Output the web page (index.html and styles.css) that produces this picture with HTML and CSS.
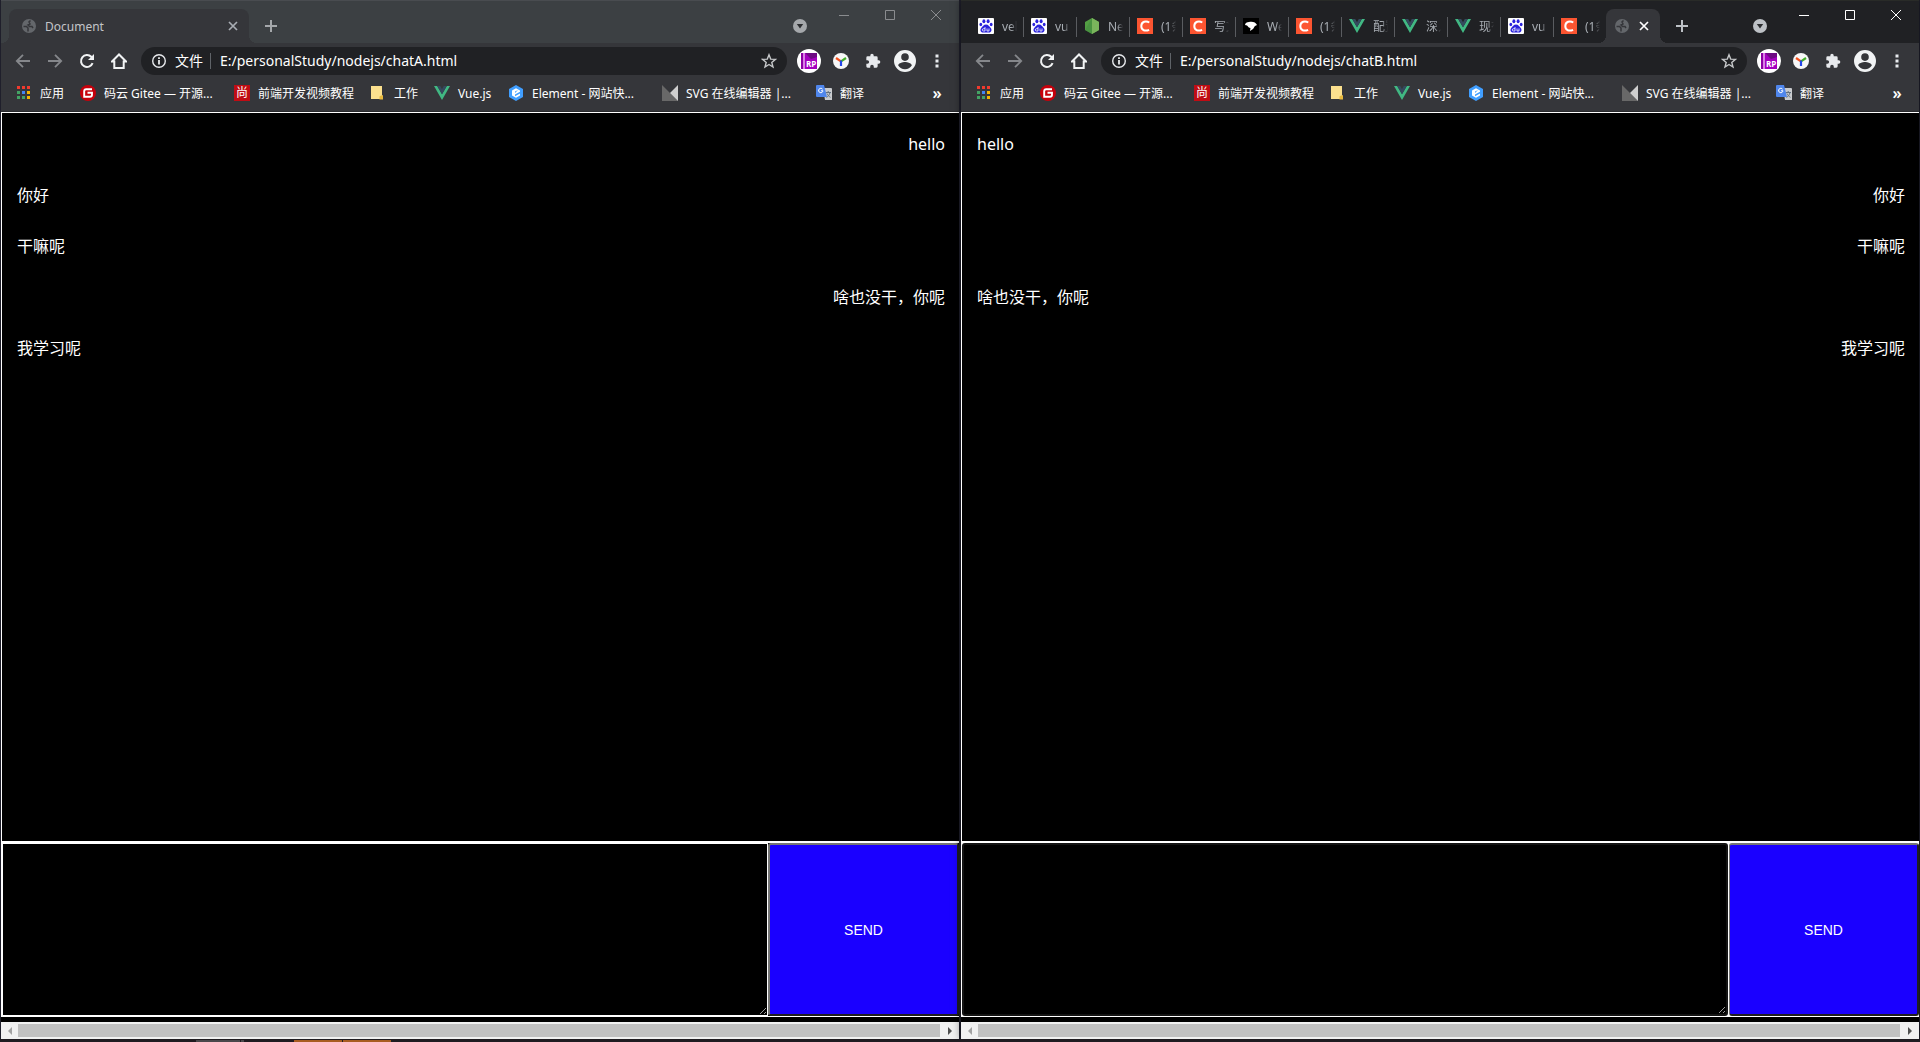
FILE: index.html
```html
<!DOCTYPE html>
<html lang="zh-CN">
<head>
<meta charset="utf-8">
<title>Chat windows</title>
<link rel="stylesheet" href="styles.css">
</head>
<body>
<svg class="sprite" aria-hidden="true">
  <symbol id="i-globe" viewBox="0 0 16 16"><circle cx="8" cy="8" r="7" fill="#64676b"/><path d="M2.500 8.500h3l1.500 1.500v3.500M9.500 2.500 8 4 9 6l-2 1 1.500 1.500h2.500l1 1.500" fill="none" stroke="#35363a" stroke-width="1.500"/></symbol>
  <symbol id="i-close" viewBox="0 0 16 16"><path d="m4 4 8 8m0-8-8 8" fill="none" stroke="currentColor" stroke-width="1.700"/></symbol>
  <symbol id="i-plus" viewBox="0 0 16 16"><path d="M8 2v12M2 8h12" stroke="currentColor" stroke-width="2"/></symbol>
  <symbol id="i-drop" viewBox="0 0 16 16"><circle cx="8" cy="8" r="7" fill="currentColor"/><path d="M4.800 6h6.400L8 10.400z" fill="#2b2d30"/></symbol>
  <symbol id="i-min" viewBox="0 0 12 12"><path d="M1 6.500h10" stroke="currentColor"/></symbol>
  <symbol id="i-max" viewBox="0 0 12 12"><path d="M1.500 1.500h9v9h-9z" fill="none" stroke="currentColor"/></symbol>
  <symbol id="i-exit" viewBox="0 0 12 12"><path d="m1 1 10 10M11 1 1 11" stroke="currentColor"/></symbol>
  <symbol id="i-back" viewBox="0 0 16 16"><path d="M15 8H2.500M8 1.800 1.800 8 8 14.200" fill="none" stroke="#85878b" stroke-width="1.800"/></symbol>
  <symbol id="i-fwd" viewBox="0 0 16 16"><path d="M1 8h12.500M8 1.800 14.200 8 8 14.200" fill="none" stroke="#85878b" stroke-width="1.800"/></symbol>
  <symbol id="i-reload" viewBox="0 0 16 16"><path d="M13.600 10.200A6 6 0 1 1 12.300 3.800L14 5.500" fill="none" stroke="#f1f3f4" stroke-width="2"/><path d="M15 1v6H9z" fill="#f1f3f4"/></symbol>
  <symbol id="i-home" viewBox="0 0 16 16"><path d="M1 8.500 8 1.500l7 7h-2.300V15H3.300V8.500z" fill="none" stroke="#f1f3f4" stroke-width="2"/></symbol>
  <symbol id="i-info" viewBox="0 0 16 16"><circle cx="8" cy="8" r="6.300" fill="none" stroke="#e8eaed" stroke-width="1.400"/><path d="M8 7v4.500M8 4.300v1.600" stroke="#e8eaed" stroke-width="1.800"/></symbol>
  <symbol id="i-star" viewBox="0 0 16 16"><path d="m8 1.800 1.700 4.300 4.700.3-3.600 3 1.200 4.600L8 11.500 4 14l1.200-4.600-3.600-3 4.700-.3z" fill="none" stroke="#c6c8ca" stroke-width="1.400"/></symbol>
  <symbol id="i-rp" viewBox="0 0 24 24"><circle cx="12" cy="12" r="12" fill="#fff"/><path d="M4 4h16v16H4z" fill="#b100c8"/><path d="M8 4h12v6l-6 1z" fill="#6d0a82"/><path d="M8 4l6 6 6-2v12H8z" fill="#a400bf"/><path d="M4 4h2v16H4z" fill="#8b00a4"/><path d="M7 4v16" stroke="#fff"/><text x="9" y="18" class="glyph-rp">RP</text></symbol>
  <symbol id="i-y" viewBox="0 0 16 16"><circle cx="8" cy="8" r="8" fill="#f7f7f7"/><path d="M8 8.300 3 5" stroke="#f4511e" stroke-width="2.200"/><path d="m8 8.300 5-3.300" stroke="#43b02a" stroke-width="2.200"/><path d="M8 7.500V13" stroke="#2447e8" stroke-width="2.200"/></symbol>
  <symbol id="i-puzzle" viewBox="0 0 24 24"><path d="M20.500 11H19V7a2 2 0 0 0-2-2h-4V3.500a2.500 2.500 0 0 0-5 0V5H4a2 2 0 0 0-2 2v3.800h1.500a2.700 2.700 0 0 1 0 5.400H2V20a2 2 0 0 0 2 2h3.800v-1.500a2.700 2.700 0 0 1 5.400 0V22H17a2 2 0 0 0 2-2v-4h1.500a2.500 2.500 0 0 0 0-5z" fill="#e8eaed"/></symbol>
  <symbol id="i-user" viewBox="0 0 24 24"><path d="M12 1a11 11 0 1 0 0 22 11 11 0 0 0 0-22zm0 3.300a3.800 3.800 0 1 1 0 7.600 3.800 3.800 0 0 1 0-7.600zm0 15.900a8 8 0 0 1-6.800-3.700c.1-2.200 4.500-3.400 6.800-3.400s6.700 1.200 6.800 3.400A8 8 0 0 1 12 20.200z" fill="#f1f3f4"/></symbol>
  <symbol id="i-menu" viewBox="0 0 16 16"><path d="M6.500 1.500h3v3h-3zm0 5h3v3h-3zm0 5h3v3h-3z" fill="#e8eaed"/></symbol>
  <symbol id="i-apps" viewBox="0 0 16 16"><path d="M1 1h3v3H1zm5 0h3v3H6zm5 0h3v3h-3z" fill="#f03a2e"/><path d="M1 6h3v3H1zM1 11h3v3H1zM6 11h3v3H6z" fill="#43a364"/><path d="M6 6h3v3H6z" fill="#4285f4"/><path d="M11 6h3v3h-3zm0 5h3v3h-3z" fill="#f5b400"/></symbol>
  <symbol id="i-gitee" viewBox="0 0 16 16"><circle cx="8" cy="8" r="8" fill="#c7000b"/><path d="M12 4.200H6.200A2 2 0 0 0 4.200 6.200V11.800H10a2 2 0 0 0 2-2V7.800H7.500" fill="none" stroke="#fff" stroke-width="1.900"/></symbol>
  <symbol id="i-shang" viewBox="0 0 16 16"><path d="M0 0h16v16H0z" fill="#c00c14"/><text x="2" y="12" class="glyph-shang">尚</text></symbol>
  <symbol id="i-note" viewBox="0 0 16 16"><path d="M1 1h11v9l1 1v3H1z" fill="#fbe08e"/><path d="M9.500 14.500v-3l1.500-1h2v4z" fill="#e8b93c"/></symbol>
  <symbol id="i-vue" viewBox="0 0 16 16"><path d="M0 1h3.200L8 9.300 12.800 1H16L8 15z" fill="#41b883"/><path d="M3.200 1h3L8 4.200 9.800 1h3L8 9.300z" fill="#35495e"/></symbol>
  <symbol id="i-element" viewBox="0 0 16 16"><path d="m8 0 7 4v8l-7 4-7-4V4z" fill="#409eff"/><path d="M12 5.500 8 3.300 4 5.600v4.800l4 2.300 4-2.300V8.500L7 11.200V9.500l5-2.800zM7 8V6.500L10 5" fill="#fff"/></symbol>
  <symbol id="i-svg" viewBox="0 0 16 16"><path d="M0 0v16h16z" fill="#686868"/><path d="M16 0v16L8 8z" fill="#cfcfcf"/></symbol>
  <symbol id="i-trans" viewBox="0 0 16 16"><path d="M7 3h8a1 1 0 0 1 1 1v11H9z" fill="#c9cbce"/><path d="M9.500 7.500H15M12.200 6v1.500M14 7.500c-.5 2.500-2 4-3.500 5M11 8.500c.8 1.800 2 3 3.500 3.800" fill="none" stroke="#607080"/><path d="M1 0h7l3 12H1a1 1 0 0 1-1-1V1a1 1 0 0 1 1-1z" fill="#4f86ec"/><path d="M6.600 4.200a2.200 2.200 0 1 0 .4 1.600H5" fill="none" stroke="#fff"/></symbol>
  <symbol id="i-baidu" viewBox="0 0 16 16"><rect width="16" height="16" rx="1" fill="#fff"/><g fill="#2b22dc"><ellipse cx="5.900" cy="3.300" rx="1.500" ry="2"/><ellipse cx="10.100" cy="3.300" rx="1.500" ry="2"/><ellipse cx="2.800" cy="6.500" rx="1.400" ry="1.800"/><ellipse cx="13.200" cy="6.500" rx="1.400" ry="1.800"/><path d="M8 6.500c2.500 0 3.200 2 4.800 3.500 1.500 1.800.5 4.500-1.600 4.500H4.800c-2.100 0-3.100-2.700-1.600-4.500C4.800 8.500 5.500 6.500 8 6.500z"/></g><path d="M7 9v4H5.500a1 1 0 0 1 0-2.300H7M9 10.500V13h2v-2.500" fill="none" stroke="#fff" stroke-width=".8"/></symbol>
  <symbol id="i-node" viewBox="0 0 16 16"><path d="m8 0 7 4v8l-7 4-7-4V4z" fill="#539e43"/><path d="m8 0 7 4v8l-7 4z" fill="#7ab55c"/><path d="M8 0 1 12l7 4z" fill="#3f873f" opacity=".5"/></symbol>
  <symbol id="i-csdn" viewBox="0 0 16 16"><path d="M0 0h16v16H0z" fill="#fc5531"/><path d="M12.300 4.500C9 2.500 4.500 3.500 4.300 8c0 4.500 4 5.500 7.800 3.800" fill="none" stroke="#fff" stroke-width="2"/></symbol>
  <symbol id="i-bird" viewBox="0 0 16 16"><path d="M0 0h16v16H0z" fill="#000"/><path d="M2 7c0-2 2-3 4-3 3-1 7 0 8 3l-2 1c-1 1-1 2-2 3l-3 2 .5-3C6 10 5 8.500 4 7.500z" fill="#fff"/></symbol>
</svg>

<main class="desktop">
  <section class="window window-a" aria-label="chatA">
    <header class="tabstrip">
      <div class="tab tab-active tab-wide">
        <svg class="icon"><use href="#i-globe"/></svg>
        <span class="tab-title">Document</span>
        <button class="tab-close" aria-label="关闭"><svg class="icon"><use href="#i-close"/></svg></button>
      </div>
      <button class="new-tab" aria-label="新标签页"><svg class="icon"><use href="#i-plus"/></svg></button>
      <button class="tab-search" aria-label="搜索标签页"><svg class="icon"><use href="#i-drop"/></svg></button>
      <div class="controls">
        <button aria-label="最小化"><svg><use href="#i-min"/></svg></button>
        <button aria-label="最大化"><svg><use href="#i-max"/></svg></button>
        <button aria-label="关闭窗口"><svg><use href="#i-exit"/></svg></button>
      </div>
    </header>
    <div class="toolbar">
      <button aria-label="后退"><svg class="icon"><use href="#i-back"/></svg></button>
      <button aria-label="前进"><svg class="icon"><use href="#i-fwd"/></svg></button>
      <button aria-label="重新加载"><svg class="icon"><use href="#i-reload"/></svg></button>
      <button aria-label="主页"><svg class="icon"><use href="#i-home"/></svg></button>
      <div class="omnibox">
        <svg class="icon"><use href="#i-info"/></svg>
        <label class="scheme" for="url-a">文件</label>
        <input class="url" id="url-a" type="text" value="E:/personalStudy/nodejs/chatA.html">
        <svg class="icon"><use href="#i-star"/></svg>
      </div>
      <button aria-label="RP"><svg class="icon-rp"><use href="#i-rp"/></svg></button>
      <button aria-label="Y"><svg class="icon"><use href="#i-y"/></svg></button>
      <button aria-label="扩展程序"><svg class="icon"><use href="#i-puzzle"/></svg></button>
      <button aria-label="用户"><svg class="icon-rp"><use href="#i-user"/></svg></button>
      <button aria-label="菜单"><svg class="icon"><use href="#i-menu"/></svg></button>
    </div>
    <nav class="bookmarks">
      <a href="#"><svg class="icon"><use href="#i-apps"/></svg>应用</a>
      <a href="#"><svg class="icon"><use href="#i-gitee"/></svg>码云 Gitee — 开源...</a>
      <a href="#"><svg class="icon"><use href="#i-shang"/></svg>前端开发视频教程</a>
      <a href="#"><svg class="icon"><use href="#i-note"/></svg>工作</a>
      <a href="#"><svg class="icon"><use href="#i-vue"/></svg>Vue.js</a>
      <a href="#"><svg class="icon"><use href="#i-element"/></svg>Element - 网站快...</a>
      <a href="#"><svg class="icon"><use href="#i-svg"/></svg>SVG 在线编辑器 |...</a>
      <a href="#"><svg class="icon"><use href="#i-trans"/></svg>翻译</a>
      <button class="more" aria-label="更多书签">»</button>
    </nav>
    <div class="page">
      <div class="messages">
        <p class="mine">hello</p>
        <p>你好</p>
        <p>干嘛呢</p>
        <p class="mine">啥也没干，你呢</p>
        <p>我学习呢</p>
      </div>
      <form class="composer">
        <textarea class="draft draft-focus" aria-label="消息"></textarea>
        <button class="send" type="button">SEND</button>
      </form>
    </div>
    <div class="scrollbar"><span class="arrow arrow-left"></span><span class="thumb"></span><span class="arrow arrow-right"></span></div>
  </section>

  <section class="window window-b" aria-label="chatB">
    <header class="tabstrip">
      <div class="tab"><svg class="icon"><use href="#i-baidu"/></svg><span class="tab-title">vel</span></div>
      <div class="tab"><svg class="icon"><use href="#i-baidu"/></svg><span class="tab-title">vu</span></div>
      <div class="tab"><svg class="icon"><use href="#i-node"/></svg><span class="tab-title">Ne</span></div>
      <div class="tab"><svg class="icon"><use href="#i-csdn"/></svg><span class="tab-title">(1条</span></div>
      <div class="tab"><svg class="icon"><use href="#i-csdn"/></svg><span class="tab-title">写文</span></div>
      <div class="tab"><svg class="icon"><use href="#i-bird"/></svg><span class="tab-title">We</span></div>
      <div class="tab"><svg class="icon"><use href="#i-csdn"/></svg><span class="tab-title">(1条</span></div>
      <div class="tab"><svg class="icon"><use href="#i-vue"/></svg><span class="tab-title">配置</span></div>
      <div class="tab"><svg class="icon"><use href="#i-vue"/></svg><span class="tab-title">深入</span></div>
      <div class="tab"><svg class="icon"><use href="#i-vue"/></svg><span class="tab-title">现有</span></div>
      <div class="tab"><svg class="icon"><use href="#i-baidu"/></svg><span class="tab-title">vu</span></div>
      <div class="tab tab-last"><svg class="icon"><use href="#i-csdn"/></svg><span class="tab-title">(1条</span></div>
      <div class="tab tab-active tab-small">
        <svg class="icon"><use href="#i-globe"/></svg>
        <button class="tab-close" aria-label="关闭"><svg class="icon"><use href="#i-close"/></svg></button>
      </div>
      <button class="new-tab" aria-label="新标签页"><svg class="icon"><use href="#i-plus"/></svg></button>
      <button class="tab-search" aria-label="搜索标签页"><svg class="icon"><use href="#i-drop"/></svg></button>
      <div class="controls">
        <button aria-label="最小化"><svg><use href="#i-min"/></svg></button>
        <button aria-label="最大化"><svg><use href="#i-max"/></svg></button>
        <button aria-label="关闭窗口"><svg><use href="#i-exit"/></svg></button>
      </div>
    </header>
    <div class="toolbar">
      <button aria-label="后退"><svg class="icon"><use href="#i-back"/></svg></button>
      <button aria-label="前进"><svg class="icon"><use href="#i-fwd"/></svg></button>
      <button aria-label="重新加载"><svg class="icon"><use href="#i-reload"/></svg></button>
      <button aria-label="主页"><svg class="icon"><use href="#i-home"/></svg></button>
      <div class="omnibox">
        <svg class="icon"><use href="#i-info"/></svg>
        <label class="scheme" for="url-b">文件</label>
        <input class="url" id="url-b" type="text" value="E:/personalStudy/nodejs/chatB.html">
        <svg class="icon"><use href="#i-star"/></svg>
      </div>
      <button aria-label="RP"><svg class="icon-rp"><use href="#i-rp"/></svg></button>
      <button aria-label="Y"><svg class="icon"><use href="#i-y"/></svg></button>
      <button aria-label="扩展程序"><svg class="icon"><use href="#i-puzzle"/></svg></button>
      <button aria-label="用户"><svg class="icon-rp"><use href="#i-user"/></svg></button>
      <button aria-label="菜单"><svg class="icon"><use href="#i-menu"/></svg></button>
    </div>
    <nav class="bookmarks">
      <a href="#"><svg class="icon"><use href="#i-apps"/></svg>应用</a>
      <a href="#"><svg class="icon"><use href="#i-gitee"/></svg>码云 Gitee — 开源...</a>
      <a href="#"><svg class="icon"><use href="#i-shang"/></svg>前端开发视频教程</a>
      <a href="#"><svg class="icon"><use href="#i-note"/></svg>工作</a>
      <a href="#"><svg class="icon"><use href="#i-vue"/></svg>Vue.js</a>
      <a href="#"><svg class="icon"><use href="#i-element"/></svg>Element - 网站快...</a>
      <a href="#"><svg class="icon"><use href="#i-svg"/></svg>SVG 在线编辑器 |...</a>
      <a href="#"><svg class="icon"><use href="#i-trans"/></svg>翻译</a>
      <button class="more" aria-label="更多书签">»</button>
    </nav>
    <div class="page">
      <div class="messages">
        <p>hello</p>
        <p class="mine">你好</p>
        <p class="mine">干嘛呢</p>
        <p>啥也没干，你呢</p>
        <p class="mine">我学习呢</p>
      </div>
      <form class="composer">
        <textarea class="draft" aria-label="消息"></textarea>
        <button class="send" type="button">SEND</button>
      </form>
    </div>
    <div class="scrollbar"><span class="arrow arrow-left"></span><span class="thumb"></span><span class="arrow arrow-right"></span></div>
  </section>
</main>
<footer class="taskbar">
  <span class="task"></span><span class="task task-edge"></span>
  <span class="task task-alert"></span><span class="task task-alert"></span>
</footer>
</body>
</html>
```

FILE: styles.css
```css
* { box-sizing: border-box; }

body {
  margin: 0;
  min-height: 100vh;
  display: flex;
  flex-direction: column;
  background: #1f1f2b;
  color: #fff;
  font-family: "Noto Sans", "Noto Sans CJK SC", sans-serif;
  font-size: 12px;
}

.sprite { display: none; }
.glyph-rp { font: bold 8px "Open Sans", sans-serif; fill: #fff; }
.glyph-shang { font: 12px "Noto Sans CJK SC", sans-serif; fill: #fff; }

button {
  display: flex;
  align-items: center;
  justify-content: center;
  padding: 0;
  border: 0;
  background: none;
  color: inherit;
  font: inherit;
}

svg { display: block; flex: none; }
.icon { width: 16px; height: 16px; }
.icon-rp { width: 24px; height: 24px; }

.desktop {
  flex: 1;
  display: grid;
  grid-template-columns: minmax(0, 1fr) minmax(0, 1fr);
  gap: 2px;
  padding: 0 1px;
}

.window {
  display: flex;
  flex-direction: column;
  min-width: 0;
  background: #35363a;
}
.window-b { box-shadow: 0 0 8px rgba(0, 0, 0, .5); }

/* Tab strip */
.tabstrip {
  display: flex;
  align-items: flex-end;
  height: 43px;
  padding-left: 8px;
  border-top: 1px solid #494c50;
  background: #3c4043;
  color: #a5a8ab;
}
.window-b .tabstrip {
  padding-left: 10px;
  border-top-color: #292b28;
  background: #202124;
  color: #bdc1c6;
}
.tab {
  position: relative;
  display: flex;
  align-items: center;
  gap: 8px;
  width: 53px;
  height: 34px;
  padding-left: 7px;
  color: #a8adb3;
}
.tab .tab-title {
  width: 15px;
  overflow: hidden;
  white-space: nowrap;
  mask-image: linear-gradient(90deg, #000 60%, transparent);
}
.window-b .tab:not(.tab-active)::after {
  content: "";
  position: absolute;
  right: 0;
  top: 8px;
  width: 1px;
  height: 20px;
  background: #5a5c60;
}
.window-b .tab.tab-last { width: 52px; }
.window-b .tab.tab-last::after { display: none; }
.tab-active {
  border-radius: 8px 8px 0 0;
  background: #35363a;
}
.tab-active::before, .tab-active::after {
  content: "";
  position: absolute;
  bottom: 0;
  width: 8px;
  height: 8px;
}
.tab-active::before { left: -8px; background: radial-gradient(circle at 0 0, transparent 8px, #35363a 8px); }
.tab-active::after { right: -8px; background: radial-gradient(circle at 100% 0, transparent 8px, #35363a 8px); }
.tab-wide { width: 240px; padding: 0 8px 0 12px; }
.tab-wide .tab-title { flex: 1; mask-image: none; color: #c3c5c8; }
.tab-small { width: 54px; gap: 6px; padding-left: 8px; }
.tab-small .tab-close { color: #fff; }
.new-tab { width: 28px; height: 34px; margin-left: 8px; }
.tab-search { width: 16px; height: 34px; margin: 0 13px 0 auto; }
.controls { display: flex; align-self: flex-start; color: #8a8c8f; }
.window-b .controls { color: #fff; }
.controls button { width: 46px; height: 28px; }
.controls svg { width: 12px; height: 12px; }

/* Toolbar */
.toolbar {
  display: flex;
  align-items: center;
  height: 36px;
  padding: 0 6px;
}
.toolbar button { width: 32px; height: 32px; }
.omnibox {
  flex: 1;
  display: flex;
  align-items: center;
  height: 28px;
  margin: 0 6px;
  padding: 0 10px;
  border-radius: 14px;
  background: #202124;
}
.scheme {
  margin-left: 8px;
  padding-right: 7px;
  border-right: 1px solid #5f6368;
  font-size: 14px;
  line-height: 16px;
}
.url {
  flex: 1;
  min-width: 0;
  height: 20px;
  margin-left: 9px;
  padding: 0 0 2px;
  border: 0;
  outline: 0;
  background: none;
  color: #fff;
  font: 14px "Noto Sans", "Noto Sans CJK SC", sans-serif;
}

/* Bookmarks */
.bookmarks {
  display: grid;
  grid-template-columns: 64px 154px 136px 64px 74px 154px 154px 1fr 24px;
  align-items: center;
  height: 33px;
  padding: 0 10px 4px 15px;
  border-bottom: 1px solid #292a2d;
}
.bookmarks a {
  display: flex;
  align-items: center;
  gap: 8px;
  color: #fff;
  text-decoration: none;
  white-space: nowrap;
}
.more { height: 28px; font-size: 16px; font-weight: 600; }

/* Chat page */
.page {
  flex: 1;
  display: flex;
  flex-direction: column;
  padding-bottom: 5px;
  background: #000;
}
.messages {
  flex: 1;
  padding: 6px 14px 0 15px;
  border: solid #fff;
  border-width: 1px 0 1px 1px;
  font-size: 16px;
}
.messages p { margin: 0; line-height: 51px; }
.messages .mine { text-align: right; }

.composer {
  display: flex;
  height: 175px;
  border: solid #fff;
  border-width: 1px 0 1px 1px;
  background: #000;
}
.draft {
  flex: 1;
  min-width: 0;
  margin: 0;
  padding: 2px;
  border: 2px solid #141414;
  border-radius: 3px;
  outline: 0;
  background: #000;
  color: #fff;
}
.draft-focus { border: 1px solid #fff; border-radius: 0; }
.window-b .composer { background: #fff; gap: 1px; }
.send {
  width: 191px;
  border: 2px solid;
  border-color: #767676 #1f1f1f #1f1f1f #767676;
  border-radius: 3px;
  background: #1a00ff;
  font: 14px "Liberation Sans", sans-serif;
}
.window-b .send { width: 190px; border-left-width: 1px; }

/* Horizontal scrollbar */
.scrollbar {
  display: flex;
  align-items: center;
  height: 17px;
  background: #f1f1f1;
}
.thumb { flex: 1; height: 13px; background: #c1c1c1; }
.arrow { display: flex; align-items: center; justify-content: center; width: 17px; }
.arrow-right { width: 19px; }
.arrow::before { content: ""; border: 4px solid transparent; }
.arrow-left::before { border-left: 0; border-right-color: #a3a3a3; }
.arrow-right::before { border-right: 0; border-left-color: #505050; }

/* Taskbar sliver */
.taskbar {
  display: flex;
  gap: 1px;
  height: 3px;
  padding: 1px 0 0 196px;
  background: #1f1b20;
}
.task { width: 44px; background: #4a484b; }
.task-edge { width: 3px; margin-right: 49px; }
.task-alert { width: 48px; background: #a85c20; }
```
